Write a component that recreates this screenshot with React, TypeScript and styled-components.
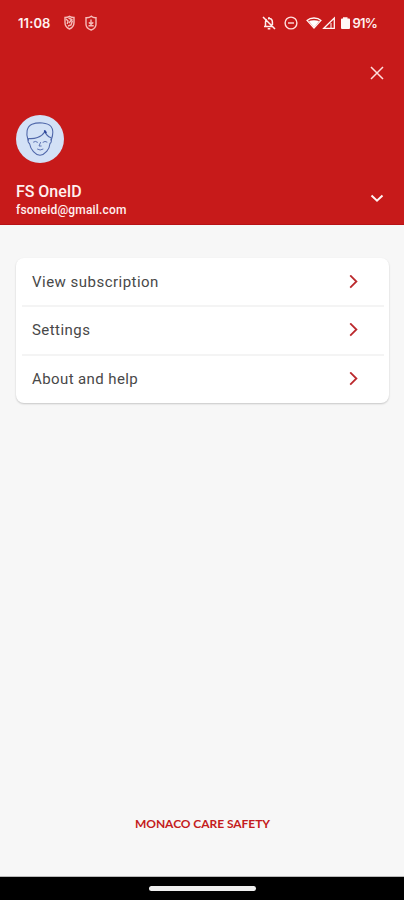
import React from "react";
import styled, { createGlobalStyle } from "styled-components";

const GlobalStyle = createGlobalStyle`
  * { box-sizing: border-box; }
  body { margin: 0; background: #f7f7f7; font-family: Roboto, "Liberation Sans", sans-serif; }
  svg { display: block; flex: none; fill: none; }
`;

const Screen = styled.div`
  width: 404px;
  height: 900px;
  display: flex;
  flex-direction: column;
  background: #f7f7f7;
  overflow: hidden;
`;

const Header = styled.header`
  height: 225px;
  flex: none;
  display: flex;
  flex-direction: column;
  background: #c71a1a;
  color: #fff0ef;
  border-bottom: 1px solid #b81216;
`;

const StatusBar = styled.div`
  height: 46px;
  padding: 0 27px 0 18px;
  display: flex;
  align-items: center;
  justify-content: space-between;
`;

const StatusGroup = styled.div<{ $gap?: number }>`
  display: flex;
  align-items: center;
  gap: ${(p) => p.$gap ?? 0}px;
`;

const StatusText = styled.span<{ $spacing: number }>`
  font: 600 13px/16px Inter, Roboto, sans-serif;
  letter-spacing: ${(p) => p.$spacing}px;
  white-space: nowrap;
`;

const IconButton = styled.button`
  border: 0;
  padding: 0;
  background: none;
  color: inherit;
  cursor: pointer;
`;

const CloseRow = styled.div`
  height: 54px;
  padding: 0 20px;
  display: flex;
  align-items: center;
  justify-content: flex-end;
`;

const Avatar = styled.div`
  width: 48px;
  height: 48px;
  margin: 15px 0 0 16px;
  border-radius: 50%;
  background: #d3e1f6;
  overflow: hidden;
`;

const Account = styled.div`
  margin-top: 19px;
  padding: 0 20px 0 16px;
  display: flex;
  justify-content: space-between;
  align-items: flex-start;
`;

const Name = styled.div`
  font-size: 16px;
  line-height: 20px;
  font-weight: 500;
  letter-spacing: -0.05px;
`;

const Email = styled.div`
  font-size: 12px;
  line-height: 16px;
  font-weight: 500;
  letter-spacing: 0.18px;
`;

const ExpandButton = styled(IconButton)`
  margin-top: 11px;
`;

const Main = styled.main`
  flex: 1;
  padding: 33px 15px 0 16px;
  display: flex;
  flex-direction: column;
  justify-content: space-between;
`;

const Card = styled.nav`
  height: 145px;
  padding: 0 5px 0 6px;
  border-radius: 8px;
  background: #fff;
  box-shadow: 0 1px 2px rgba(0, 0, 0, 0.2);
`;

const MenuItem = styled.div`
  height: 49px;
  padding: 0 25px 2px 10px;
  display: flex;
  align-items: center;
  justify-content: space-between;
  color: #484848;
  font-size: 15px;
  line-height: 20px;
  & + & { border-top: 2px solid #f4f4f4; }
  &:first-child { height: 47px; padding-bottom: 0; }
`;

const Label = styled.span<{ $spacing: number }>`
  letter-spacing: ${(p) => p.$spacing}px;
`;

const Brand = styled.div`
  margin-bottom: 45px;
  text-align: center;
  color: #c41b20;
  font: 700 12px/16px Lato, sans-serif;
  letter-spacing: -0.05px;
`;

const NavigationBar = styled.footer`
  height: 23px;
  flex: none;
  display: flex;
  align-items: center;
  justify-content: center;
  background: #000;
  box-shadow: 0 -1px 0 #bababa;
`;

const HomeHandle = styled.div`
  width: 107px;
  height: 5px;
  border-radius: 3px;
  background: #efefef;
`;

const LeftIcons = () => (
  <svg width="34" height="16" viewBox="0 0 34 16" stroke="#f6bcb9" strokeWidth="1.4">
    <path d="M2 2.5Q4.5 2.5 6.5 1.3Q8.5 2.5 11 2.5V7.5C11 10.8 9 13 6.5 14C4 13 2 10.8 2 7.5Z" />
    <path d="M3 4L5 6L4.2 9M5.5 3L8.8 4.5L6 8M9.5 5.5L8 10L5 11" />
    <path d="M23 2.8Q26.5 3 28.3 1.2Q30.2 3 33 2.8V9.3C33 12 31 14 28.2 15C25 14 23 12 23 9.3Z" />
    <path d="M28 4.5V9M25.8 7.4L28 9.3L30.3 7.4M25.5 10.8H30.7" />
  </svg>
);

const BellOff = () => (
  <svg width="14" height="14" viewBox="0 0 14 14" stroke="#fff0ef" strokeWidth="1.5">
    <path d="M1 1L13 13M2 10.5H11M3.5 10.2V6C3.5 4.7 4 3.8 4.8 3.3M6 2.7C8.9 2 10.4 3.6 10.4 6V9M7 1V2.4M5.7 12.7H8.3" />
  </svg>
);

const DoNotDisturb = () => (
  <svg width="14" height="14" viewBox="0 0 14 14" stroke="#ffe0de" strokeWidth="1.4">
    <circle cx="7" cy="7" r="5.9" />
    <path d="M4 7H10" />
  </svg>
);

const NetworkIcons = () => (
  <svg width="44" height="14" viewBox="0 0 44 14" stroke="#fff7f6">
    <path d="M1 4.4C4.5 1.2 11.5 1.2 15 4.4L8 12Z" strokeWidth="1.3" />
    <path d="M2.8 4.9Q8 3.8 13.2 4.9L8 11.5Z" fill="#fff" stroke="none" />
    <path d="M17.8 12.3L28.3 2V12.3Z" strokeWidth="1.3" />
    <path d="M25 7V12" strokeWidth="1" />
    <path d="M37 1.2H41.5V2.5H43Q44 2.5 44 3.5V12Q44 13 43 13H36Q35 13 35 12V3.5Q35 2.5 36 2.5H37Z" fill="#fff7f6" stroke="none" />
  </svg>
);

const Face = () => (
  <svg width="48" height="48" viewBox="0 0 48 48" stroke="#5068aa" strokeWidth="1.1" strokeLinecap="round" strokeLinejoin="round">
    <path d="M12 25C9.8 19 10.5 11.5 16 9.3C22 7 31.5 7.5 35 11.5C38 15 37 20 35.3 25" />
    <path d="M12.5 23.5C18 24.2 25.5 22.5 29 16.5C30 19.8 33 22 35 22.8" />
    <path d="M12.5 24Q11.3 27 13.5 28.5C14.5 34.5 19.5 40 24 40.2C29 39.8 33.5 34.5 34 28.5Q36 27 35 24" />
    <path d="M17.5 27Q19.5 25.5 21.5 27.2M27 27.2Q29 25.5 31 27M24.5 27.5L23 31H25.2M21.5 34.2Q24 36 27 34.2" strokeWidth=".9" />
    <path d="M28.8 16L29.8 17.5" stroke="#2b449b" strokeWidth="2" />
  </svg>
);

const CloseIcon = () => (
  <svg width="14" height="14" viewBox="0 0 14 14" stroke="#ffdfdd" strokeWidth="1.5">
    <path d="M1 1L13 13M13 1L1 13" />
  </svg>
);

const ChevronDown = () => (
  <svg width="14" height="10" viewBox="0 0 14 10" stroke="#fff4f3" strokeWidth="2">
    <path d="M1.5 2.5L7 7.7L12.5 2.5" />
  </svg>
);

const ChevronRight = () => (
  <svg width="10" height="14" viewBox="0 0 10 14" stroke="#bb292d" strokeWidth="1.8">
    <path d="M1.2 .4L7.4 6.5L1.2 12.6" />
  </svg>
);

const menuItems = [
  { label: "View subscription", spacing: 0.48 },
  { label: "Settings", spacing: 0.45 },
  { label: "About and help", spacing: 0.4 },
];

export default function App() {
  return (
    <>
      <GlobalStyle />
      <Screen>
        <Header>
          <StatusBar>
            <StatusGroup $gap={12}>
              <StatusText $spacing={0.1}>11:08</StatusText>
              <LeftIcons />
            </StatusGroup>
            <StatusGroup $gap={8}>
              <BellOff />
              <DoNotDisturb />
              <StatusGroup $gap={3}>
                <NetworkIcons />
                <StatusText $spacing={-0.8}>91%</StatusText>
              </StatusGroup>
            </StatusGroup>
          </StatusBar>
          <CloseRow>
            <IconButton aria-label="Close"><CloseIcon /></IconButton>
          </CloseRow>
          <Avatar><Face /></Avatar>
          <Account>
            <div>
              <Name>FS OneID</Name>
              <Email>fsoneid@gmail.com</Email>
            </div>
            <ExpandButton aria-label="Show accounts"><ChevronDown /></ExpandButton>
          </Account>
        </Header>
        <Main>
          <Card>
            {menuItems.map((item) => (
              <MenuItem key={item.label}>
                <Label $spacing={item.spacing}>{item.label}</Label>
                <ChevronRight />
              </MenuItem>
            ))}
          </Card>
          <Brand>MONACO CARE SAFETY</Brand>
        </Main>
        <NavigationBar><HomeHandle /></NavigationBar>
      </Screen>
    </>
  );
}
